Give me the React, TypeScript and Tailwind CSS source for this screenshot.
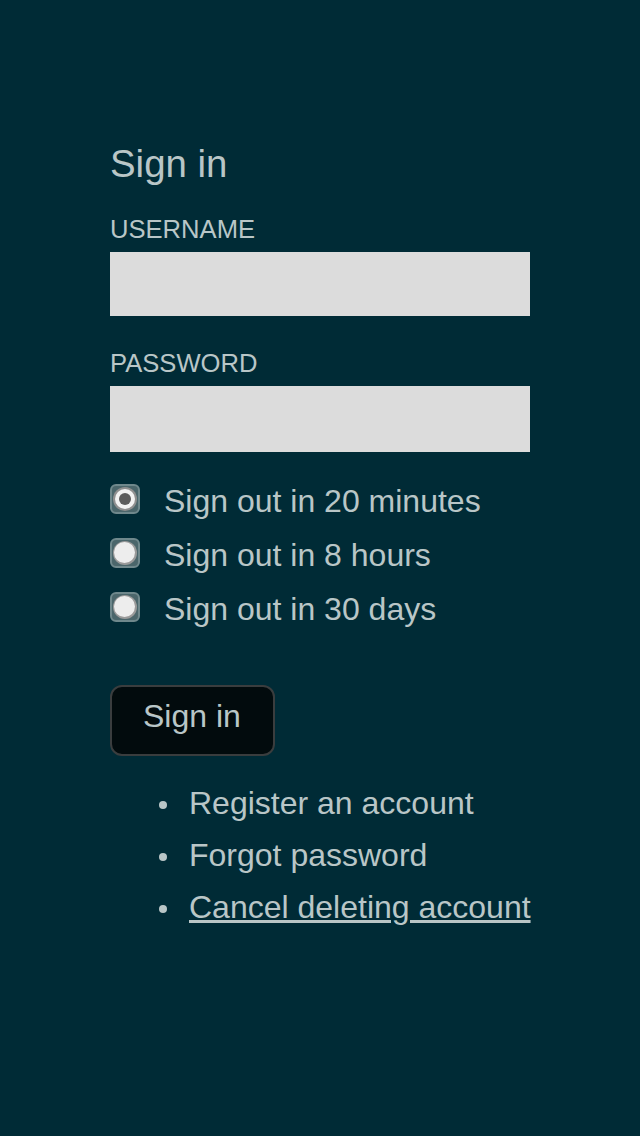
import React from "react";

function Radio({ checked }: { checked?: boolean }) {
  return (
    <div className="mt-[10px] w-[30px] h-[30px] shrink-0 rounded-[6px] bg-[#4b666b] border-2 border-[#6f888c] flex items-center justify-center">
      {checked ? (
        <div className="w-[24px] h-[24px] rounded-full bg-[#8f8f8f] flex items-center justify-center">
          <div className="w-[20px] h-[20px] rounded-full bg-[#f2f2f2] flex items-center justify-center">
            <div className="w-[12px] h-[12px] rounded-full bg-[#5c5c5c]" />
          </div>
        </div>
      ) : (
        <div className="w-[24px] h-[24px] rounded-full bg-[#9a9a9a] flex items-start justify-start">
          <div className="w-[21px] h-[21px] rounded-full bg-[#ededed] ml-[0.5px] mt-[0.5px]" />
        </div>
      )}
    </div>
  );
}

function Item({ children }: { children: React.ReactNode }) {
  return (
    <li className="flex items-center h-[52px] whitespace-nowrap">
      <span className="w-[8px] h-[8px] rounded-full bg-[#b9c6c7] ml-[49px] mr-[22px] mt-[4px] shrink-0" />
      {children}
    </li>
  );
}

export default function App() {
  const rows = ["Sign out in 20 minutes", "Sign out in 8 hours", "Sign out in 30 days"];
  return (
    <div
      className="w-[640px] min-h-[1136px] bg-[#002b36] text-[#b9c6c7]"
      style={{ fontFamily: '"Liberation Sans", Arial, sans-serif' }}
    >
      <div className="px-[110px] pt-[141px] flex flex-col">
        <h1 className="text-[38.4px] leading-[46px] font-normal">Sign in</h1>
        <div className="mt-[27px] text-[25.6px] leading-[30px]">USERNAME</div>
        <div className="mt-[8px] h-[64px] bg-[#dcdcdc]" />
        <div className="mt-[32px] text-[25.6px] leading-[30px]">PASSWORD</div>
        <div className="mt-[8px] h-[66px] bg-[#dcdcdc]" />
        <div className="mt-[22px] flex flex-col">
          {rows.map((r, i) => (
            <div key={r} className="flex items-start gap-[24px] h-[54px]">
              <Radio checked={i === 0} />
              <span className="text-[32px] leading-[54px]">{r}</span>
            </div>
          ))}
        </div>
        <div className="mt-[49px]">
          <button className="h-[71px] pl-[31px] pr-8 pt-[13px] pb-[22px] border-2 border-[#3a3d3e] rounded-[12px] bg-[#020b0d] text-[32px] leading-[32px] text-[#b9c6c7] flex items-start">
            Sign in
          </button>
        </div>
        <ul className="mt-[21px] text-[32px] leading-[52px]">
          <Item>Register an account</Item>
          <Item>Forgot password</Item>
          <Item>
            <span className="underline">Cancel deleting account</span>
          </Item>
        </ul>
      </div>
    </div>
  );
}
